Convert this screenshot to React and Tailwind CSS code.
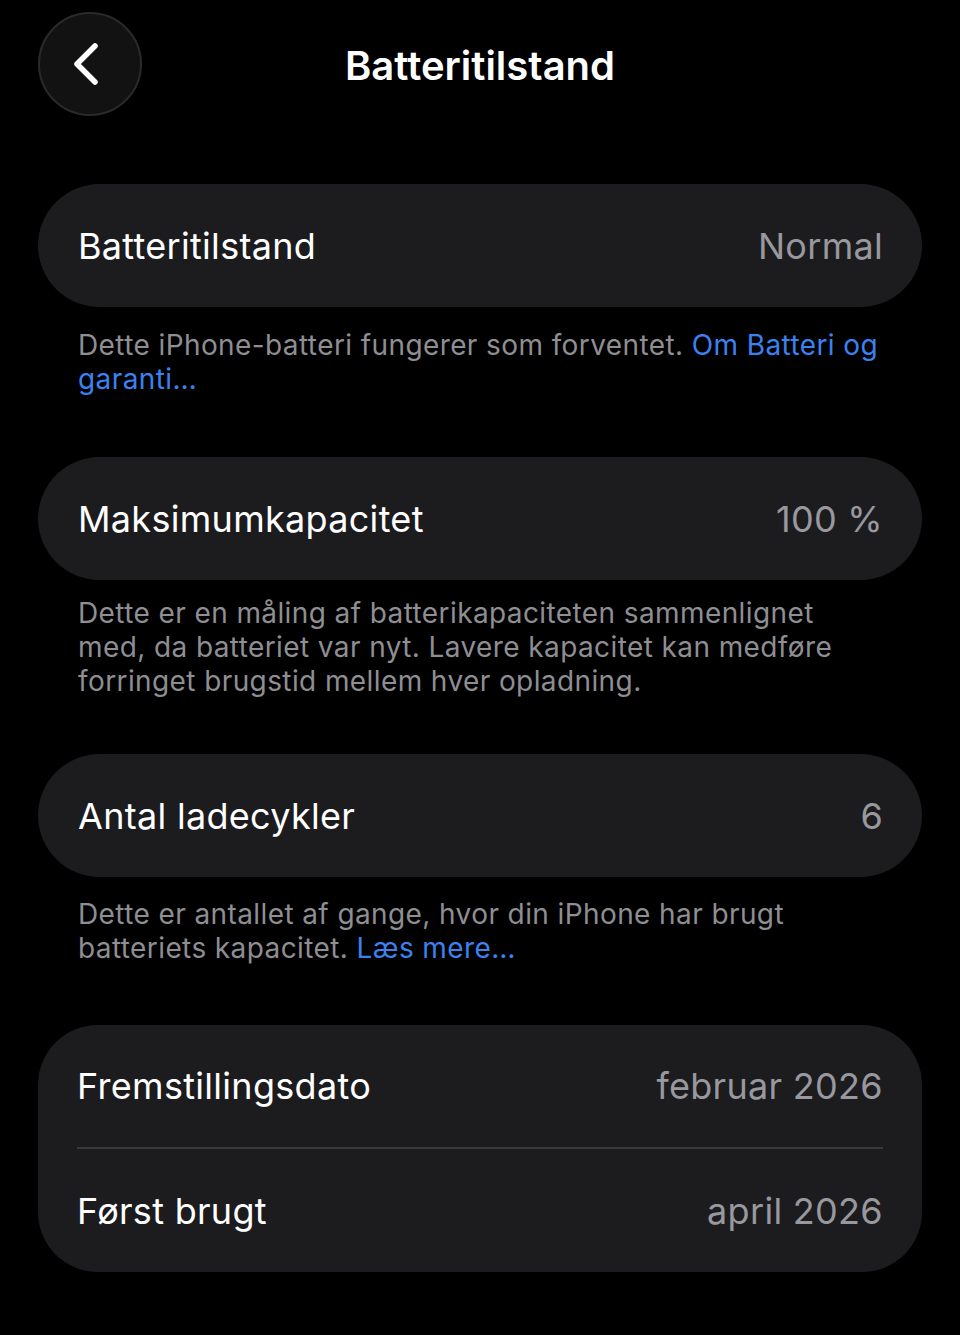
import React from "react";

const font = { fontFamily: 'Inter, "Noto Sans", "Liberation Sans", sans-serif' };

function Pill({ label, value }) {
  return (
    <div className="mx-[38px] h-[123px] rounded-full bg-[#1c1c1e] flex items-center justify-between pl-[40px] pr-[39px]">
      <span className="text-[36px] text-white tracking-[0.3px]">{label}</span>
      <span className="text-[36px] text-[#98989e] tracking-[0.3px]">{value}</span>
    </div>
  );
}

function Note({ children, mt = "mt-[21px]" }) {
  return (
    <p className={`${mt} mx-[78px] text-[28px] leading-[34px] text-[#8e8e93] tracking-[0.4px]`}>
      {children}
    </p>
  );
}

export default function App() {
  return (
    <div className="w-[960px] h-[1335px] bg-black overflow-hidden" style={font}>
      <div className="relative h-[130px] flex items-center justify-center">
        <div className="absolute left-[38px] top-[12px] w-[104px] h-[104px] rounded-full bg-[#121212] border-2 border-[#2a2a2c] flex items-center justify-center">
          <svg width="40" height="48" viewBox="0 0 40 48" className="ml-[-6px]">
            <path d="M28 6 L10 24 L28 42" fill="none" stroke="white" strokeWidth="5.5" strokeLinecap="round" strokeLinejoin="round" />
          </svg>
        </div>
        <h1 className="text-[40px] font-semibold text-white tracking-normal mt-[2px]">Batteritilstand</h1>
      </div>

      <div className="mt-[54px]">
        <Pill label="Batteritilstand" value="Normal" />
        <Note>
          Dette iPhone-batteri fungerer som forventet.{" "}
          <span className="text-[#3b82f0]">Om Batteri og garanti…</span>
        </Note>
      </div>

      <div className="mt-[61px]">
        <Pill label="Maksimumkapacitet" value="100 %" />
        <Note mt="mt-[16px]">
          Dette er en måling af batterikapaciteten sammenlignet med, da batteriet var nyt. Lavere kapacitet kan medføre forringet brugstid mellem hver opladning.
        </Note>
      </div>

      <div className="mt-[56px]">
        <Pill label="Antal ladecykler" value="6" />
        <Note mt="mt-[20px]">
          Dette er antallet af gange, hvor din iPhone har brugt batteriets kapacitet.{" "}
          <span className="text-[#3b82f0]">Læs mere…</span>
        </Note>
      </div>

      <div className="mt-[60px] mx-[38px] rounded-[60px] bg-[#1c1c1e] px-[39px]">
        <div className="h-[122px] flex items-center justify-between">
          <span className="text-[36px] text-white tracking-[0.3px]">Fremstillingsdato</span>
          <span className="text-[36px] text-[#98989e] tracking-[0.3px]">februar 2026</span>
        </div>
        <div className="h-[2px] bg-[#38383a]" />
        <div className="h-[123px] flex items-center justify-between">
          <span className="text-[36px] text-white tracking-[0.3px]">Først brugt</span>
          <span className="text-[36px] text-[#98989e] tracking-[0.3px]">april 2026</span>
        </div>
      </div>
    </div>
  );
}
